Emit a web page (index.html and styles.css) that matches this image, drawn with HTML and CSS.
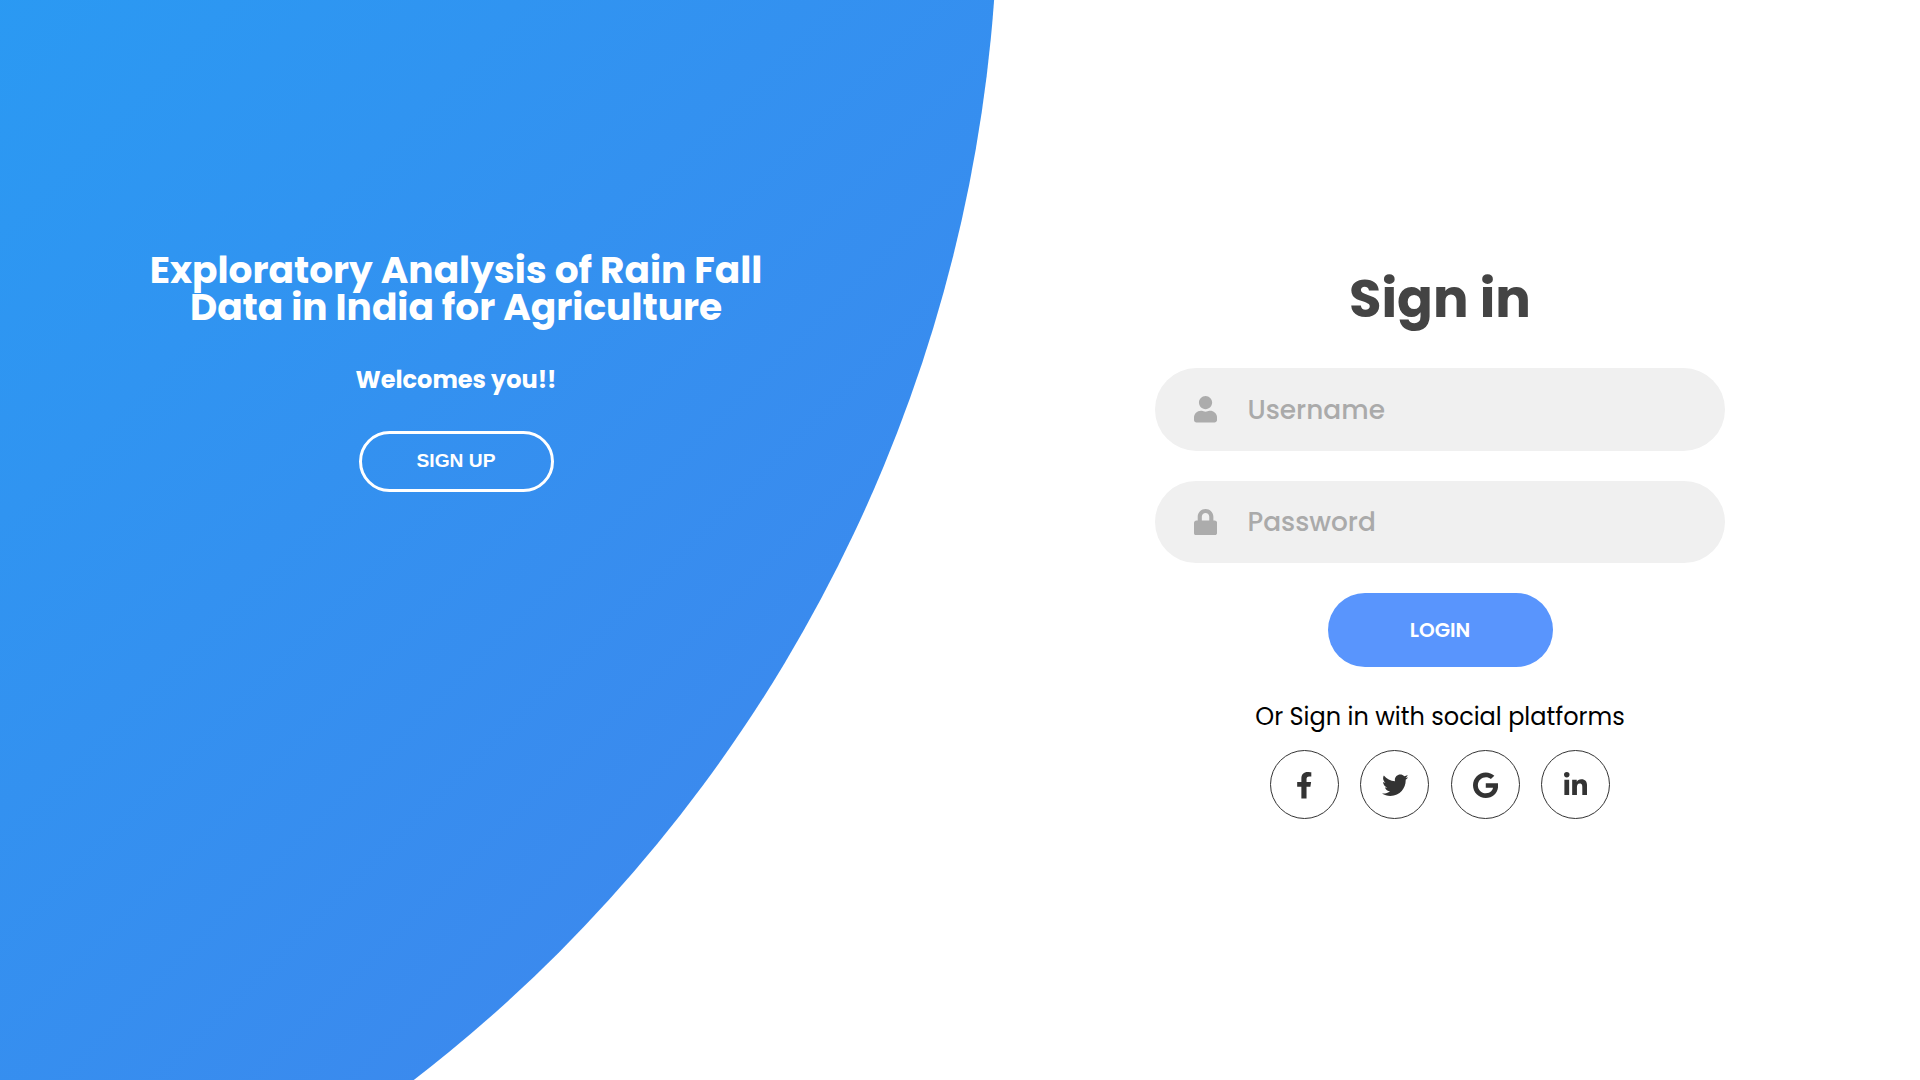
FILE: index.html
```
<!DOCTYPE html>
<html lang="en">
<head>
<meta charset="utf-8">
<title>Sign in</title>
<link rel="stylesheet" href="styles.css">
</head>
<body>
<main class="container">
  <section class="intro">
    <h1 class="intro-title">Exploratory Analysis of Rain Fall<br>Data in India for Agriculture</h1>
    <p class="intro-welcome">Welcomes you!!</p>
    <button class="btn-outline" type="button">SIGN UP</button>
  </section>
  <form class="sign-in">
    <h2 class="form-title">Sign in</h2>
    <label class="field">
      <svg class="field-icon" viewBox="0 0 448 512"><path d="M224 256c70.7 0 128-57.3 128-128S294.7 0 224 0 96 57.3 96 128s57.3 128 128 128zm89.6 32h-16.7c-22.2 10.2-46.9 16-72.9 16s-50.6-5.8-72.9-16h-16.7C60.2 288 0 348.2 0 422.4V464c0 26.5 21.5 48 48 48h352c26.5 0 48-21.5 48-48v-41.6c0-74.2-60.2-134.4-134.4-134.4z"/></svg>
      <input class="field-input username" type="text" placeholder="Username">
    </label>
    <label class="field">
      <svg class="field-icon" viewBox="0 0 448 512"><path d="M400 224h-24v-72C376 68.2 307.8 0 224 0S72 68.2 72 152v72H48c-26.5 0-48 21.5-48 48v192c0 26.5 21.5 48 48 48h352c26.5 0 48-21.5 48-48V272c0-26.5-21.5-48-48-48zm-104 0H152v-72c0-39.7 32.3-72 72-72s72 32.3 72 72v72z"/></svg>
      <input class="field-input password" type="password" placeholder="Password">
    </label>
    <button class="btn-solid" type="button">LOGIN</button>
    <p class="social-text">Or Sign in with social platforms</p>
    <nav class="social">
      <a class="social-link" href="#" aria-label="Facebook"><svg class="social-icon" viewBox="0 0 320 512"><path d="M279.14 288l14.22-92.66h-88.91v-60.13c0-25.35 12.42-50.06 52.24-50.06h40.42V6.26S260.43 0 225.36 0c-73.22 0-121.08 44.38-121.08 124.72v70.62H22.89V288h81.39v224h100.17V288z"/></svg></a>
      <a class="social-link" href="#" aria-label="Twitter"><svg class="social-icon" viewBox="0 0 512 512"><path d="M459.37 151.716c.325 4.548.325 9.097.325 13.645 0 138.72-105.583 298.558-298.558 298.558-59.452 0-114.68-17.219-161.137-47.106 8.447.974 16.568 1.299 25.34 1.299 49.055 0 94.213-16.568 130.274-44.832-46.132-.975-84.792-31.188-98.112-72.772 6.498.974 12.995 1.624 19.818 1.624 9.421 0 18.843-1.3 27.614-3.573-48.081-9.747-84.143-51.98-84.143-102.985v-1.299c13.969 7.797 30.214 12.67 47.431 13.319-28.264-18.843-46.781-51.005-46.781-87.391 0-19.492 5.197-37.36 14.294-52.954 51.655 63.675 129.3 105.258 216.365 109.807-1.624-7.797-2.599-15.918-2.599-24.04 0-57.828 46.782-104.934 104.934-104.934 30.213 0 57.502 12.67 76.67 33.137 23.715-4.548 46.456-13.32 66.599-25.34-7.798 24.366-24.366 44.833-46.132 57.827 21.117-2.273 41.584-8.122 60.426-16.243-14.292 20.791-32.161 39.308-52.628 54.253z"/></svg></a>
      <a class="social-link" href="#" aria-label="Google"><svg class="social-icon" viewBox="0 0 488 512"><path d="M488 261.8C488 403.3 391.1 504 248 504 110.8 504 0 393.2 0 256S110.8 8 248 8c66.8 0 123 24.5 166.3 64.9l-67.5 64.9C258.5 52.6 94.3 116.6 94.3 256c0 86.5 69.1 156.6 153.7 156.6 98.2 0 135-70.4 140.8-106.9H248v-85.3h236.1c2.3 12.7 3.9 24.9 3.9 41.4z"/></svg></a>
      <a class="social-link" href="#" aria-label="LinkedIn"><svg class="social-icon" viewBox="0 0 448 512"><path d="M100.28 448H7.4V148.9h92.88zM53.79 108.1C24.09 108.1 0 83.5 0 53.8a53.79 53.79 0 0 1 107.58 0c0 29.7-24.1 54.3-53.79 54.3zM447.9 448h-92.68V302.4c0-34.7-.7-79.2-48.29-79.2-48.29 0-55.69 37.7-55.69 76.7V448h-92.78V148.9h89.08v40.8h1.3c12.4-23.5 42.69-48.3 87.88-48.3 94 0 111.28 61.9 111.28 142.3V448z"/></svg></a>
    </nav>
  </form>
</main>
</body>
</html>
```
FILE: styles.css
```
* { box-sizing: border-box; margin: 0; padding: 0; }
body { font-family: Poppins, Inter, "Noto Sans", sans-serif; background: #fff; }
.container {
  position: relative;
  display: grid;
  grid-template-columns: 912px 1fr;
  width: 100%;
  height: 100vh;
  overflow: hidden;
}
/* Large gradient disc behind the intro column */
.container::before {
  content: "";
  position: absolute;
  top: -10%;
  right: 48%;
  width: 3000px;
  height: 3000px;
  border-radius: 50%;
  transform: translateY(-50%);
  background: linear-gradient(-45deg, #4481eb 0%, #04befe 100%);
}
.intro {
  position: relative;
  display: flex;
  flex-direction: column;
  align-items: center;
  padding-top: 252px;
  color: #fff;
  text-align: center;
}
.intro-title { font-size: 37.5px; line-height: 37px; font-weight: 700; white-space: nowrap; }
.intro-welcome { margin-top: 34px; font-size: 24px; line-height: 40px; font-weight: 700; }
.btn-outline {
  width: 195px;
  height: 61px;
  margin-top: 31px;
  padding-bottom: 2px;
  border: 3px solid #fff;
  border-radius: 74px;
  background: none;
  color: #fff;
  font: 700 19.2px "Liberation Sans", sans-serif;
}
.sign-in {
  display: flex;
  flex-direction: column;
  align-items: center;
  padding: 259px 0 0 48px;
}
.form-title { font-size: 52.8px; line-height: 80px; font-weight: 700; color: #444; }
.field {
  display: flex;
  align-items: center;
  width: 570px;
  height: 82.5px;
  margin-top: 30px;
  padding-left: 39.4px;
  border-radius: 82px;
  background: #f0f0f0;
}
.form-title + .field { margin-top: 29.4px; }
.field-icon { width: 23.1px; height: 26.4px; fill: #acacac; }
.field-input {
  flex: 1;
  min-width: 0;
  margin-left: 30px;
  border: 0;
  outline: 0;
  background: none;
  font: 500 26.4px Poppins, Inter, sans-serif;
}
.field-input::placeholder { color: #aaa; }
.username { padding-top: 1px; }
.btn-solid {
  width: 225px;
  height: 73.5px;
  margin-top: 30px;
  border: 0;
  border-radius: 74px;
  background: #5995fd;
  color: #fff;
  font: 600 20px Poppins, Inter, sans-serif;
}
.social-text { margin-top: 32.6px; font-size: 24px; line-height: 36px; color: #000; }
.social { display: flex; gap: 21.4px; margin-top: 15px; }
.social-link {
  display: flex;
  align-items: center;
  justify-content: center;
  width: 69px;
  height: 69px;
  padding-top: 1px;
  border: 1px solid #333;
  border-radius: 50%;
}
.social-icon { height: 26.4px; fill: #333; }
```
